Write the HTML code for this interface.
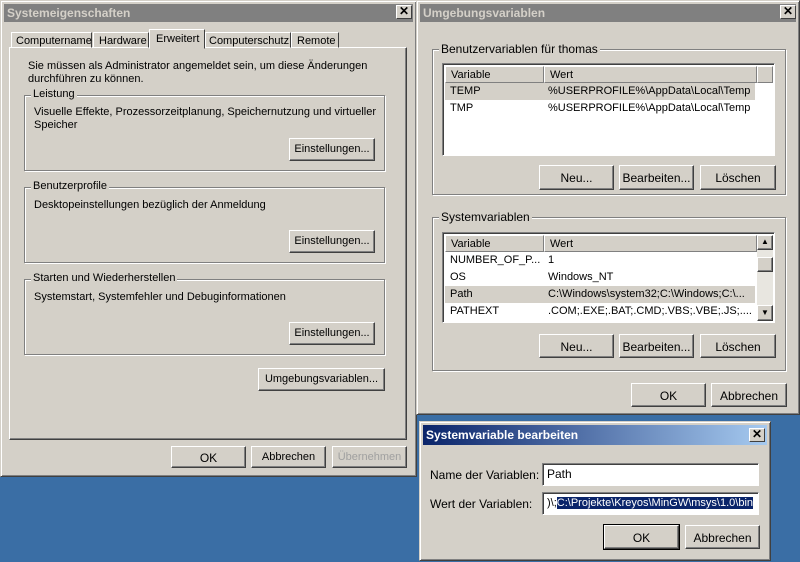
<!DOCTYPE html>
<html><head><meta charset="utf-8"><style>
*{box-sizing:border-box;margin:0;padding:0}
body{width:800px;height:562px;background:#3a6ea5;position:relative;overflow:hidden;font-family:"Liberation Sans",sans-serif;font-size:11px;color:#000}
.a{position:absolute}
.win{position:absolute;background:#d4d0c8;border:1px solid;border-color:#d4d0c8 #404040 #404040 #d4d0c8;box-shadow:inset 1px 1px #fff,inset -1px -1px #808080}
.tb{position:absolute;left:3px;right:3px;top:3px;height:18px;background:#808080;color:#d4d0c8;font-weight:bold;font-size:12px;padding:2px 3px}
.cl{position:absolute;width:16px;height:14px;background:#d4d0c8;border:1px solid;border-color:#fff #404040 #404040 #fff;font-size:12px;font-weight:bold;text-align:center;line-height:11px;color:#000}
.btn{position:absolute;background:#d4d0c8;border:1px solid;border-color:#fff #404040 #404040 #fff;box-shadow:inset -1px -1px #808080;text-align:center;font-size:11px}
.grp{position:absolute;border:1px solid #808080;box-shadow:1px 1px #fff,inset 1px 1px #fff}
.gl{position:absolute;top:-8px;left:6px;background:#d4d0c8;padding:0 2px}
.list{position:absolute;background:#fff;border:1px solid;border-color:#808080 #fff #fff #808080;box-shadow:inset 1px 1px #404040}
.hd{position:absolute;top:2px;height:17px;background:#d4d0c8;border:1px solid;border-color:#fff #808080 #808080 #fff;padding:2px 5px}
.row{position:absolute;left:2px;height:17px;padding-top:2px}
.inp{position:absolute;background:#fff;border:1px solid;border-color:#808080 #fff #fff #808080;box-shadow:inset 1px 1px #404040;padding:3px 4px;font-size:12px}
</style></head><body>

<div class="win" style="left:0;top:0;width:417px;height:477px">
 <div class="tb">Systemeigenschaften</div>
 <div class="cl" style="left:395px;top:4px">✕</div>
</div>
<div class="a" style="left:9px;top:47px;width:398px;height:393px;border:1px solid;border-color:#fff #404040 #404040 #fff;box-shadow:inset -1px -1px #808080"></div>
<div class="a" style="left:11px;top:32px;width:81px;height:16px;border:1px solid;border-color:#fff #404040 transparent #fff;padding:2px 4px">Computername</div>
<div class="a" style="left:93px;top:32px;width:56px;height:16px;border:1px solid;border-color:#fff #404040 transparent #fff;padding:2px 5px">Hardware</div>
<div class="a" style="left:149px;top:29px;width:56px;height:20px;border:1px solid;border-color:#fff #404040 transparent #fff;background:#d4d0c8;padding:3px 6px">Erweitert</div>
<div class="a" style="left:205px;top:32px;width:86px;height:16px;border:1px solid;border-color:#fff #404040 transparent #fff;padding:2px 3px">Computerschutz</div>
<div class="a" style="left:291px;top:32px;width:48px;height:16px;border:1px solid;border-color:#fff #404040 transparent #fff;padding:2px 5px">Remote</div>
<div class="a" style="left:28px;top:60px;line-height:13px">Sie müssen als Administrator angemeldet sein, um diese Änderungen<br>durchführen zu können.</div>

<div class="grp" style="left:24px;top:95px;width:361px;height:76px"><div class="gl">Leistung</div></div>
<div class="a" style="left:34px;top:106px;line-height:13px">Visuelle Effekte, Prozessorzeitplanung, Speichernutzung und virtueller<br>Speicher</div>
<div class="btn" style="left:289px;top:138px;width:86px;height:23px;padding-top:4px">Einstellungen...</div>

<div class="grp" style="left:24px;top:187px;width:361px;height:76px"><div class="gl">Benutzerprofile</div></div>
<div class="a" style="left:34px;top:199px">Desktopeinstellungen bezüglich der Anmeldung</div>
<div class="btn" style="left:289px;top:230px;width:86px;height:23px;padding-top:4px">Einstellungen...</div>

<div class="grp" style="left:24px;top:279px;width:361px;height:76px"><div class="gl">Starten und Wiederherstellen</div></div>
<div class="a" style="left:34px;top:291px">Systemstart, Systemfehler und Debuginformationen</div>
<div class="btn" style="left:289px;top:322px;width:86px;height:23px;padding-top:4px">Einstellungen...</div>

<div class="btn" style="left:258px;top:368px;width:127px;height:23px;padding-top:4px">Umgebungsvariablen...</div>
<div class="btn" style="left:171px;top:446px;width:75px;height:22px;padding-top:4px;font-size:12px">OK</div>
<div class="btn" style="left:251px;top:446px;width:75px;height:22px;padding-top:4px">Abbrechen</div>
<div class="btn" style="left:332px;top:446px;width:75px;height:22px;padding-top:4px;color:#a0a0a0">Übernehmen</div>

<div class="win" style="left:416px;top:0;width:384px;height:415px">
 <div class="tb">Umgebungsvariablen</div>
 <div class="cl" style="left:363px;top:4px">✕</div>
</div>
<div class="grp" style="left:432px;top:49px;width:354px;height:146px"><div class="gl" style="font-size:12px">Benutzervariablen für thomas</div></div>
<div class="list" style="left:442px;top:63px;width:333px;height:93px">
 <div class="hd" style="left:2px;width:99px">Variable</div>
 <div class="hd" style="left:101px;width:213px">Wert</div>
 <div class="hd" style="left:314px;width:16px"></div>
 <div class="row" style="top:19px;width:310px;background:#d4d0c8"><span style="padding-left:5px">TEMP</span><span class="a" style="left:103px">%USERPROFILE%\AppData\Local\Temp</span></div>
 <div class="row" style="top:36px;width:310px"><span style="padding-left:5px">TMP</span><span class="a" style="left:103px">%USERPROFILE%\AppData\Local\Temp</span></div>
</div>
<div class="btn" style="left:539px;top:165px;width:75px;height:25px;padding-top:5px;font-size:12px">Neu...</div>
<div class="btn" style="left:619px;top:165px;width:75px;height:25px;padding-top:5px;font-size:12px">Bearbeiten...</div>
<div class="btn" style="left:700px;top:165px;width:76px;height:25px;padding-top:5px;font-size:12px">Löschen</div>

<div class="grp" style="left:432px;top:217px;width:354px;height:154px"><div class="gl" style="font-size:12px">Systemvariablen</div></div>
<div class="list" style="left:442px;top:232px;width:333px;height:91px">
 <div class="hd" style="left:2px;width:99px">Variable</div>
 <div class="hd" style="left:101px;width:213px">Wert</div>
 <div class="a" style="left:314px;top:2px;width:16px;height:86px;background:#e8e6e0"></div>
 <div class="btn" style="left:314px;top:2px;width:16px;height:15px;font-size:8px;line-height:12px">▲</div>
 <div class="btn" style="left:314px;top:24px;width:16px;height:15px"></div>
 <div class="btn" style="left:314px;top:72px;width:16px;height:16px;font-size:8px;line-height:13px">▼</div>
 <div class="row" style="top:19px;width:310px"><span style="padding-left:5px">NUMBER_OF_P...</span><span class="a" style="left:103px">1</span></div>
 <div class="row" style="top:36px;width:310px"><span style="padding-left:5px">OS</span><span class="a" style="left:103px">Windows_NT</span></div>
 <div class="row" style="top:53px;width:310px;background:#d4d0c8"><span style="padding-left:5px">Path</span><span class="a" style="left:103px">C:\Windows\system32;C:\Windows;C:\...</span></div>
 <div class="row" style="top:70px;width:310px"><span style="padding-left:5px">PATHEXT</span><span class="a" style="left:103px">.COM;.EXE;.BAT;.CMD;.VBS;.VBE;.JS;....</span></div>
</div>
<div class="btn" style="left:539px;top:334px;width:75px;height:24px;padding-top:5px;font-size:12px">Neu...</div>
<div class="btn" style="left:619px;top:334px;width:75px;height:24px;padding-top:5px;font-size:12px">Bearbeiten...</div>
<div class="btn" style="left:700px;top:334px;width:76px;height:24px;padding-top:5px;font-size:12px">Löschen</div>
<div class="btn" style="left:631px;top:383px;width:75px;height:24px;padding-top:5px;font-size:12px">OK</div>
<div class="btn" style="left:711px;top:383px;width:76px;height:24px;padding-top:5px;font-size:12px">Abbrechen</div>

<div class="win" style="left:419px;top:421px;width:352px;height:140px">
 <div class="tb" style="background:linear-gradient(90deg,#0a246a,#a6caf0);color:#fff;height:20px;padding-top:3px">Systemvariable bearbeiten</div>
 <div class="cl" style="left:329px;top:6px">✕</div>
</div>
<div class="a" style="left:430px;top:468px;font-size:12px">Name der Variablen:</div>
<div class="a" style="left:430px;top:497px;font-size:12px">Wert der Variablen:</div>
<div class="inp" style="left:542px;top:463px;width:217px;height:23px">Path</div>
<div class="inp" style="left:542px;top:492px;width:217px;height:23px;white-space:nowrap;overflow:hidden;font-size:11px;padding-top:4px">)\;<span style="background:#0a246a;color:#fff">C:\Projekte\Kreyos\MinGW\msys\1.0\bin</span></div>
<div class="btn" style="left:604px;top:525px;width:75px;height:24px;padding-top:5px;font-size:12px;outline:1px solid #000">OK</div>
<div class="btn" style="left:685px;top:525px;width:75px;height:24px;padding-top:5px;font-size:12px">Abbrechen</div>
</body></html>
